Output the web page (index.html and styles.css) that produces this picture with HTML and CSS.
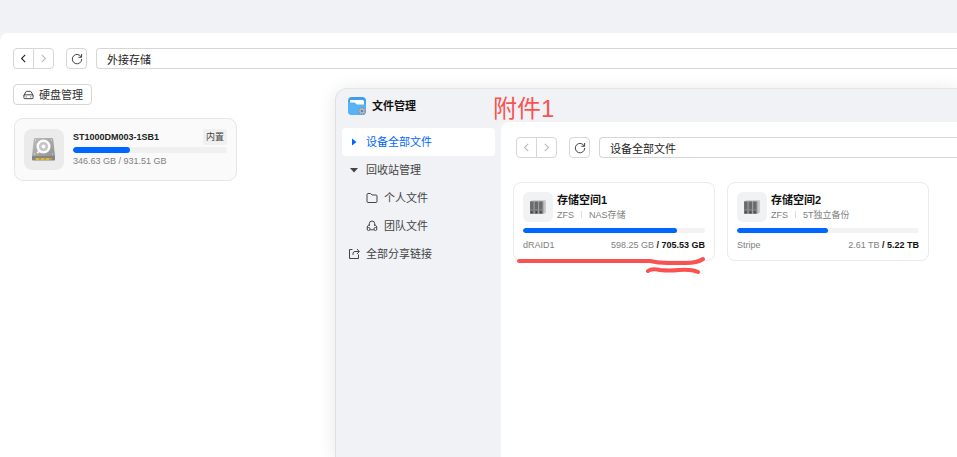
FILE: index.html
```html
<!DOCTYPE html>
<html lang="zh-CN">
<head>
<meta charset="utf-8">
<title>文件管理</title>
<link rel="stylesheet" href="styles.css">
</head>
<body>
<main class="desktop">
  <section class="panel" aria-label="外接存储">
    <div class="toolbar">
      <div class="nav">
        <button type="button" aria-label="后退"><svg viewBox="0 0 8 8"><path d="M5.500.8 2.300 4l3.200 3.200"/></svg></button>
        <button type="button" aria-label="前进" disabled><svg viewBox="0 0 8 8"><path d="M2.500.8 5.700 4 2.500 7.200"/></svg></button>
      </div>
      <button type="button" class="refresh" aria-label="刷新"><svg viewBox="0 0 12 12"><path d="M10.300 4.200A4.700 4.700 0 1 0 10.700 6M10.600 1v3.300H7.400"/></svg></button>
      <input class="address" type="text" aria-label="路径" value="外接存储">
    </div>
    <button type="button" class="manage">
      <svg viewBox="0 0 12 10"><path d="M1 5.500 3 1.600Q3.300 1 4 1h4q.7 0 1 .6l2 3.900M2 4.800h8q1 0 1 1V8q0 1-1 1H2Q1 9 1 8V5.800q0-1 1-1ZM3 7h1M8 7h1"/></svg>
      硬盘管理
    </button>
    <article class="disk">
      <div class="disk-icon">
        <svg viewBox="0 0 40 40">
          <defs><linearGradient id="metal" x1="0" y1="0" x2="1" y2="1"><stop offset="0" stop-color="#bdbdbd"/><stop offset="1" stop-color="#929292"/></linearGradient></defs>
          <path d="M11 9h17q1 0 1.200 1L31 27.500H8L9.800 10q.2-1 1.200-1Z" fill="url(#metal)"/>
          <path d="M8 27h23v3.500q0 1-1 1H9q-1 0-1-1Z" fill="#858585"/>
          <path d="M11.500 30h16" stroke="#dcb92f" stroke-width="2" stroke-dasharray="4 1"/>
          <path d="m13 24 4-3" stroke="#f2f2f2" stroke-width="2"/>
          <circle cx="19.500" cy="17.500" r="5.800" fill="#c4c4c4" stroke="#fafafa" stroke-width="2.500"/>
          <circle cx="19.500" cy="17.500" r="2" fill="#fff"/>
          <path d="M11 11h1M27 11h1M10 25h1M28 25h1" stroke="#eee"/>
        </svg>
      </div>
      <div class="disk-info">
        <div class="disk-head"><h2>ST1000DM003-1SB1</h2><span class="tag">内置</span></div>
        <div class="bar"><div class="fill" style="width:37.2%"></div></div>
        <p class="capacity">346.63 GB / 931.51 GB</p>
      </div>
    </article>
  </section>

  <section class="window" aria-label="文件管理">
    <header class="titlebar">
      <svg class="app-icon" viewBox="0 0 18 18">
        <defs><linearGradient id="app" x1="0" y1="0" x2="0" y2="1"><stop offset="0" stop-color="#3b9be9"/><stop offset="1" stop-color="#63b9f7"/></linearGradient></defs>
        <rect width="18" height="18" rx="4" fill="url(#app)"/>
        <path d="M2 3h12.500q1.500 0 1.500 1.500V8H9L7 6H2Z" fill="#fff"/>
        <path d="M0 5.500h6.500l2 2H18V14q0 4-4 4H4q-4 0-4-4Z" fill="#58b3f6"/>
        <circle cx="14" cy="14" r="3.200" fill="#b5c1ce" stroke="#8494a4" stroke-width="1.500" stroke-dasharray="1.500 .8"/>
        <circle cx="14" cy="14" r="1.300" fill="#71808e"/>
      </svg>
      <h1>文件管理</h1>
    </header>
    <div class="window-body">
      <nav class="sidebar">
        <a href="#all" class="item active"><svg viewBox="0 0 12 12"><path class="solid" d="M4 2.500v7L8.500 6Z"/></svg>设备全部文件</a>
        <a href="#trash" class="item"><svg viewBox="0 0 12 12"><path class="solid" d="M2 4h8L6 8.500Z"/></svg>回收站管理</a>
        <a href="#personal" class="item child"><svg viewBox="0 0 12 12"><path d="M1 9.500V2.500Q1 1.500 2 1.500h2.500L6 3h4q1 0 1 1v5.500q0 1-1 1H2q-1 0-1-1Z"/></svg>个人文件</a>
        <a href="#team" class="item child"><svg viewBox="0 0 12 12"><path d="M3.300 6V3.700a2.700 2.700 0 0 1 5.400 0V6M3.300 4.500Q1.200 5.500 1.100 8M8.700 4.500q2.100 1 2.200 3.500M4.200 9.800h3.600"/><circle cx="2.600" cy="9" r="1.500"/><circle cx="9.400" cy="9" r="1.500"/></svg>团队文件</a>
        <a href="#shared" class="item"><svg viewBox="0 0 12 12"><path d="M4.500 1.500H1.500V10.500h9V6.500M5 7V5.500Q5 3.500 7 3.500h4M9 1l2.300 2.500L9 6"/></svg>全部分享链接</a>
      </nav>
      <div class="content">
        <div class="toolbar">
          <div class="nav">
            <button type="button" aria-label="后退" disabled><svg viewBox="0 0 8 8"><path d="M5.500.8 2.300 4l3.200 3.200"/></svg></button>
            <button type="button" aria-label="前进" disabled><svg viewBox="0 0 8 8"><path d="M2.500.8 5.700 4 2.500 7.200"/></svg></button>
          </div>
          <button type="button" class="refresh" aria-label="刷新"><svg viewBox="0 0 12 12"><path d="M10.300 4.200A4.700 4.700 0 1 0 10.700 6M10.600 1v3.300H7.400"/></svg></button>
          <input class="address" type="text" aria-label="路径" value="设备全部文件">
        </div>
        <div class="volumes">
          <article class="volume">
            <div class="volume-head">
              <div class="volume-icon"><svg viewBox="0 0 16 14"><path d="m1 2 2-1h12v11l-2 1H1Z" fill="#c6c6c6"/><path d="M1 2h12v11H1z" fill="#a0a0a0"/><path d="M1 2h3v11H1zM5 2h3v11H5zM9 2h3v11H9z" fill="#6a6a6a"/><path d="M1 9.500h3M5 9.500h3M9 9.500h3" stroke="#858585"/><path d="M2 11.500h1M6 11.500h1M10 11.500h1" stroke="#222"/></svg></div>
              <div><h2>存储空间1</h2><p class="meta"><span>ZFS</span><span>NAS存储</span></p></div>
            </div>
            <div class="bar"><div class="fill" style="width:84.8%"></div></div>
            <div class="usage"><span>dRAID1</span><span>598.25 GB <b>/ 705.53 GB</b></span></div>
          </article>
          <article class="volume">
            <div class="volume-head">
              <div class="volume-icon"><svg viewBox="0 0 16 14"><path d="m1 2 2-1h12v11l-2 1H1Z" fill="#c6c6c6"/><path d="M1 2h12v11H1z" fill="#a0a0a0"/><path d="M1 2h3v11H1zM5 2h3v11H5zM9 2h3v11H9z" fill="#6a6a6a"/><path d="M1 9.500h3M5 9.500h3M9 9.500h3" stroke="#858585"/><path d="M2 11.500h1M6 11.500h1M10 11.500h1" stroke="#222"/></svg></div>
              <div><h2>存储空间2</h2><p class="meta"><span>ZFS</span><span>5T独立备份</span></p></div>
            </div>
            <div class="bar"><div class="fill" style="width:50%"></div></div>
            <div class="usage"><span>Stripe</span><span>2.61 TB <b>/ 5.22 TB</b></span></div>
          </article>
        </div>
      </div>
    </div>
    <span class="note">附件1</span>
    <svg class="marks" viewBox="0 0 190 18" aria-hidden="true"><path d="M2 5h131Q141 7 151 7h18q11 0 17-4M131 15q4-3 12-1 9 1 19 0 12-1 19 2"/></svg>
  </section>
</main>
</body>
</html>
```
FILE: styles.css
```css
* { box-sizing: border-box; }

body {
  margin: 0;
  background: #f1f2f5;
  color: #222;
  font: 11px/16px "Liberation Sans", "Noto Sans CJK SC", sans-serif;
}

h1, h2, p { margin: 0; font-size: 11px; }
button, input { font: inherit; color: inherit; }
button { padding: 0; background: #fff; }
svg { flex: none; fill: none; stroke: currentColor; }

.desktop {
  position: relative;
  min-height: 100vh;
  padding-top: 33px;
  display: flex;
  overflow: hidden;
}

.panel {
  flex: 1;
  padding: 15px 0 0 13px;
  background: #fff;
  border-radius: 8px 0 0 0;
}

.toolbar { display: flex; align-items: center; }
.nav { display: flex; margin-right: 12px; }
.nav button, .refresh, .address, .manage {
  height: 21px;
  border: 1px solid #d6d6d6;
  border-radius: 4px;
}
.nav button, .refresh {
  display: flex;
  align-items: center;
  justify-content: center;
  width: 21px;
}
.nav button:first-child { border-radius: 4px 0 0 4px; }
.nav button:last-child { border-radius: 0 4px 4px 0; margin-left: -1px; }
.nav button:disabled { color: #bbb; }
.nav svg { width: 9px; height: 9px; }
.refresh { margin-right: 9px; color: #444; }
.refresh svg { width: 12px; height: 12px; }
.address {
  flex: 1;
  min-width: 0;
  padding: 0 10px;
  background: #fff;
  border-right: 0;
  border-radius: 4px 0 0 4px;
}

.manage {
  display: flex;
  align-items: center;
  gap: 5px;
  margin-top: 15px;
  padding: 0 8px 0 9px;
  color: #333;
}
.manage svg { width: 11px; height: 10px; }

.disk {
  display: flex;
  align-items: flex-start;
  gap: 9px;
  width: 223px;
  margin: 13px 0 0 1px;
  padding: 10px 9px;
  background: #fafafa;
  border: 1px solid #e6e6e6;
  border-radius: 9px;
}
.disk-icon {
  width: 40px;
  height: 41px;
  background: #ebebeb;
  border-radius: 8px;
}
.disk-icon svg { display: block; width: 40px; height: 40px; stroke: none; }
.disk-info { flex: 1; color: #808080; font-size: 9px; line-height: 16px; }
.disk-head { display: flex; justify-content: space-between; margin-bottom: 2px; }
.disk-head h2 { color: #222; font-size: 9px; }
.capacity { font-size: 9px; }
.tag {
  height: 16px;
  padding: 0 3px;
  background: #f0f0f0;
  border-radius: 3px;
  color: #444;
}

.bar { height: 5px; background: #f3f3f4; border-radius: 3px; overflow: hidden; }
.fill { height: 100%; background: #06f; border-radius: 3px; }
.disk .bar { height: 6px; background: #f0f0f0; }

.window {
  position: absolute;
  inset: 88px 0 0 335px;
  display: flex;
  flex-direction: column;
  background: #f1f2f5;
  border-top: 1px solid #e4e5e7;
  border-left: 1px solid #dfe0e2;
  border-radius: 12px 0 0 0;
  box-shadow: 0 2px 18px rgba(0, 0, 0, .1);
}
.titlebar {
  display: flex;
  align-items: center;
  gap: 6px;
  height: 33px;
  padding-left: 12px;
}
.app-icon { width: 18px; height: 18px; stroke: none; }
.titlebar h1 { color: #111; }

.window-body { flex: 1; display: flex; }
.sidebar { width: 165px; padding: 6px; }
.item {
  display: flex;
  align-items: center;
  gap: 6px;
  height: 28px;
  padding-left: 6px;
  border-radius: 4px;
  color: #444;
  text-decoration: none;
}
.item svg { width: 12px; height: 12px; }
.item .solid { fill: currentColor; stroke: none; }
.child { padding-left: 24px; }
.active { background: #fff; color: #06f; }

.content {
  flex: 1;
  min-width: 0;
  padding: 15px 0 0 12px;
  background: #fff;
  border-radius: 8px 0 0 0;
}
.content .toolbar { padding-left: 3px; }
.volumes { display: flex; flex-wrap: wrap; gap: 12px; margin-top: 24px; }
.volume {
  width: 202px;
  padding: 9px 9px 7px;
  border: 1px solid #ebebeb;
  border-radius: 8px;
  color: #808080;
  font-size: 9px;
}
.volume-head { display: flex; gap: 4px; margin-bottom: 6px; }
.volume-head h2 { color: #111; line-height: 16px; }
.volume-icon {
  display: flex;
  align-items: center;
  justify-content: center;
  width: 30px;
  height: 30px;
  background: #f1f2f4;
  border-radius: 6px;
}
.volume-icon svg { width: 18px; height: 16px; }
.volume-icon path:not([stroke]) { stroke: none; }
.meta { display: flex; align-items: center; font-size: 9px; line-height: 14px; }
.meta span + span { margin-left: 7px; }
.meta span + span::before {
  content: "";
  display: inline-block;
  height: 7px;
  margin-right: 7px;
  border-left: 1px solid #ddd;
}
.usage { display: flex; justify-content: space-between; margin-top: 4px; line-height: 16px; }
.usage b { color: #111; }

.note {
  position: absolute;
  left: 157px;
  top: 2px;
  color: #fa5252;
  font-size: 24px;
  line-height: 36px;
}
.marks {
  position: absolute;
  left: 181px;
  top: 167px;
  width: 190px;
  height: 18px;
  color: #fa5252;
  stroke-width: 4;
  stroke-linecap: round;
  stroke-linejoin: round;
}
```
